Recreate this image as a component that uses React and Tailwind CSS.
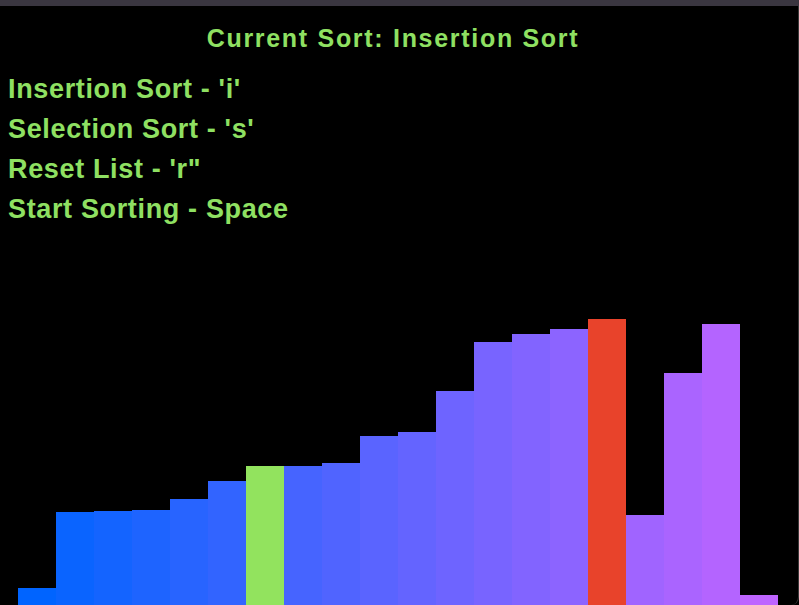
import React from 'react';

// bar heights in px, bottom-aligned
const heights = [17, 93, 94, 95, 106, 124, 139, 139, 142, 169, 173, 214, 263, 271, 276, 286, 90, 232, 281, 10];

const GREEN_INDEX = 6;
const RED_INDEX = 15;

const keys = [
  "Insertion Sort - 'i'",
  "Selection Sort - 's'",
  'Reset List - \'r"',
  'Start Sorting - Space',
];

const barColor = (i) => {
  if (i === GREEN_INDEX) return '#92e35e';
  if (i === RED_INDEX) return '#e8432b';
  return `rgb(${i * 10}, 100, 255)`;
};

const App = () => {
  return (
    <div className="w-[799px] h-[605px] bg-black flex flex-col overflow-hidden font-['Liberation_Sans',Arial,sans-serif] font-bold text-[#8fe062]">
      <div className="h-[6px] bg-[#3a3640] shrink-0" />
      <div className="flex-1 flex flex-col border-r border-r-[#3a3a3a] rounded-br-[8px] min-h-0">
        {/* header */}
        <div className="w-[786px] text-center text-[25px] leading-[25px] mt-[20px] tracking-[1.7px]">
          Current Sort: Insertion Sort
        </div>

        {/* key list */}
        <div className="flex flex-col pl-[8px] mt-[18px] text-[27px] leading-[40px] tracking-[0.65px]">
          {keys.map((k) => (
            <div key={k}>{k}</div>
          ))}
        </div>

        {/* bars */}
        <div className="flex-1 flex items-end pl-[18px]">
          {heights.map((h, i) => (
            <div
              key={i}
              className="w-[38px] shrink-0"
              style={{ height: h, backgroundColor: barColor(i) }}
            />
          ))}
        </div>
      </div>
    </div>
  );
};

export default App;
